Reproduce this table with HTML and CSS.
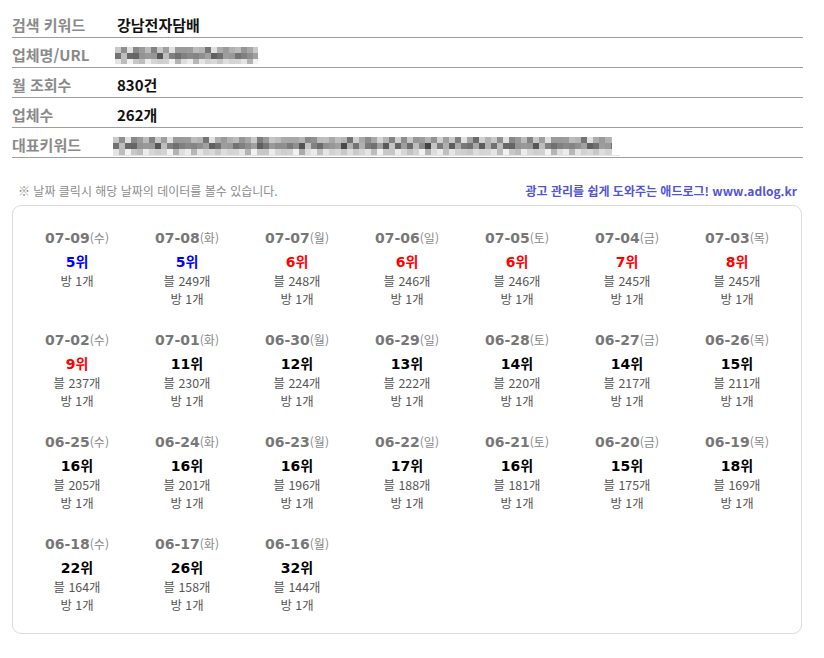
FILE: index.html
```html
<!DOCTYPE html>
<html lang="ko">
<head>
<meta charset="utf-8">
<link rel="stylesheet" href="styles.css">
</head>
<body>
<div class="wrap">
  <div class="info">
    <div class="row"><div class="label">검색 키워드</div><div class="value">강남전자담배</div></div>
    <div class="row"><div class="label">업체명/URL</div><div class="value">
      <svg class="blur blur-url" width="143" height="17" viewBox="0 0 143 17">
        <defs>
          <pattern id="pa" width="42" height="18" patternUnits="userSpaceOnUse">
            <rect x="0" y="0" width="6" height="6" fill="#c8c8c8"/><rect x="6" y="0" width="6" height="6" fill="#a8a8a8"/><rect x="12" y="0" width="6" height="6" fill="#e0e0e0"/><rect x="18" y="0" width="6" height="6" fill="#b5b5b5"/><rect x="24" y="0" width="6" height="6" fill="#9a9a9a"/><rect x="30" y="0" width="6" height="6" fill="#d0d0d0"/><rect x="36" y="0" width="6" height="6" fill="#bcbcbc"/>
            <rect x="0" y="6" width="6" height="6" fill="#8f8f8f"/><rect x="6" y="6" width="6" height="6" fill="#bdbdbd"/><rect x="12" y="6" width="6" height="6" fill="#a0a0a0"/><rect x="18" y="6" width="6" height="6" fill="#707070"/><rect x="24" y="6" width="6" height="6" fill="#c4c4c4"/><rect x="30" y="6" width="6" height="6" fill="#999999"/><rect x="36" y="6" width="6" height="6" fill="#b0b0b0"/>
            <rect x="0" y="12" width="6" height="6" fill="#e5e5e5"/><rect x="6" y="12" width="6" height="6" fill="#d2d2d2"/><rect x="12" y="12" width="6" height="6" fill="#f2f2f2"/><rect x="18" y="12" width="6" height="6" fill="#c8c8c8"/><rect x="24" y="12" width="6" height="6" fill="#dedede"/><rect x="30" y="12" width="6" height="6" fill="#ececec"/><rect x="36" y="12" width="6" height="6" fill="#d6d6d6"/>
          </pattern>
          <pattern id="pb" width="54" height="18" patternUnits="userSpaceOnUse">
            <rect x="6" y="0" width="6" height="6" fill="#000" fill-opacity=".15"/><rect x="18" y="0" width="6" height="6" fill="#000" fill-opacity=".25"/><rect x="30" y="0" width="6" height="6" fill="#000" fill-opacity=".1"/><rect x="36" y="0" width="6" height="6" fill="#000" fill-opacity=".3"/><rect x="48" y="0" width="6" height="6" fill="#000" fill-opacity=".05"/>
            <rect x="0" y="6" width="6" height="6" fill="#000" fill-opacity=".2"/><rect x="12" y="6" width="6" height="6" fill="#000" fill-opacity=".35"/><rect x="18" y="6" width="6" height="6" fill="#000" fill-opacity=".1"/><rect x="24" y="6" width="6" height="6" fill="#000" fill-opacity=".25"/><rect x="36" y="6" width="6" height="6" fill="#000" fill-opacity=".15"/><rect x="42" y="6" width="6" height="6" fill="#000" fill-opacity=".4"/>
            <rect x="6" y="12" width="6" height="6" fill="#000" fill-opacity=".1"/><rect x="24" y="12" width="6" height="6" fill="#000" fill-opacity=".15"/><rect x="42" y="12" width="6" height="6" fill="#000" fill-opacity=".1"/>
          </pattern>
        </defs>
        <rect width="143" height="17" fill="url(#pa)"/>
        <rect width="143" height="17" fill="url(#pb)"/>
      </svg>
    </div></div>
    <div class="row"><div class="label">월 조회수</div><div class="value">830건</div></div>
    <div class="row"><div class="label">업체수</div><div class="value">262개</div></div>
    <div class="row"><div class="label">대표키워드</div><div class="value">
      <svg class="blur blur-kw" width="507" height="19" viewBox="0 0 507 19">
        <rect width="499" height="18" fill="url(#pa)"/>
        <rect width="499" height="18" fill="url(#pb)"/>
        <rect x="0" y="18" width="507" height="1" fill="#e4e4e4"/>
      </svg>
    </div></div>
  </div>

  <div class="notes">
    <span class="note">※ 날짜 클릭시 해당 날짜의 데이터를 볼수 있습니다.</span>
    <span class="promo">광고 관리를 쉽게 도와주는 애드로그! www.adlog.kr</span>
  </div>

  <div class="card">
    <div class="grid">
      <div class="cell"><div class="date">07-09<span class="dow">(수)</span></div><div class="rank blue">5<span class="k">위</span></div><div class="sub">방 1개</div></div>
      <div class="cell"><div class="date">07-08<span class="dow">(화)</span></div><div class="rank blue">5<span class="k">위</span></div><div class="sub">블 249개</div><div class="sub">방 1개</div></div>
      <div class="cell"><div class="date">07-07<span class="dow">(월)</span></div><div class="rank red">6<span class="k">위</span></div><div class="sub">블 248개</div><div class="sub">방 1개</div></div>
      <div class="cell"><div class="date">07-06<span class="dow">(일)</span></div><div class="rank red">6<span class="k">위</span></div><div class="sub">블 246개</div><div class="sub">방 1개</div></div>
      <div class="cell"><div class="date">07-05<span class="dow">(토)</span></div><div class="rank red">6<span class="k">위</span></div><div class="sub">블 246개</div><div class="sub">방 1개</div></div>
      <div class="cell"><div class="date">07-04<span class="dow">(금)</span></div><div class="rank red">7<span class="k">위</span></div><div class="sub">블 245개</div><div class="sub">방 1개</div></div>
      <div class="cell"><div class="date">07-03<span class="dow">(목)</span></div><div class="rank red">8<span class="k">위</span></div><div class="sub">블 245개</div><div class="sub">방 1개</div></div>

      <div class="cell"><div class="date">07-02<span class="dow">(수)</span></div><div class="rank red">9<span class="k">위</span></div><div class="sub">블 237개</div><div class="sub">방 1개</div></div>
      <div class="cell"><div class="date">07-01<span class="dow">(화)</span></div><div class="rank">11<span class="k">위</span></div><div class="sub">블 230개</div><div class="sub">방 1개</div></div>
      <div class="cell"><div class="date">06-30<span class="dow">(월)</span></div><div class="rank">12<span class="k">위</span></div><div class="sub">블 224개</div><div class="sub">방 1개</div></div>
      <div class="cell"><div class="date">06-29<span class="dow">(일)</span></div><div class="rank">13<span class="k">위</span></div><div class="sub">블 222개</div><div class="sub">방 1개</div></div>
      <div class="cell"><div class="date">06-28<span class="dow">(토)</span></div><div class="rank">14<span class="k">위</span></div><div class="sub">블 220개</div><div class="sub">방 1개</div></div>
      <div class="cell"><div class="date">06-27<span class="dow">(금)</span></div><div class="rank">14<span class="k">위</span></div><div class="sub">블 217개</div><div class="sub">방 1개</div></div>
      <div class="cell"><div class="date">06-26<span class="dow">(목)</span></div><div class="rank">15<span class="k">위</span></div><div class="sub">블 211개</div><div class="sub">방 1개</div></div>

      <div class="cell"><div class="date">06-25<span class="dow">(수)</span></div><div class="rank">16<span class="k">위</span></div><div class="sub">블 205개</div><div class="sub">방 1개</div></div>
      <div class="cell"><div class="date">06-24<span class="dow">(화)</span></div><div class="rank">16<span class="k">위</span></div><div class="sub">블 201개</div><div class="sub">방 1개</div></div>
      <div class="cell"><div class="date">06-23<span class="dow">(월)</span></div><div class="rank">16<span class="k">위</span></div><div class="sub">블 196개</div><div class="sub">방 1개</div></div>
      <div class="cell"><div class="date">06-22<span class="dow">(일)</span></div><div class="rank">17<span class="k">위</span></div><div class="sub">블 188개</div><div class="sub">방 1개</div></div>
      <div class="cell"><div class="date">06-21<span class="dow">(토)</span></div><div class="rank">16<span class="k">위</span></div><div class="sub">블 181개</div><div class="sub">방 1개</div></div>
      <div class="cell"><div class="date">06-20<span class="dow">(금)</span></div><div class="rank">15<span class="k">위</span></div><div class="sub">블 175개</div><div class="sub">방 1개</div></div>
      <div class="cell"><div class="date">06-19<span class="dow">(목)</span></div><div class="rank">18<span class="k">위</span></div><div class="sub">블 169개</div><div class="sub">방 1개</div></div>

      <div class="cell"><div class="date">06-18<span class="dow">(수)</span></div><div class="rank">22<span class="k">위</span></div><div class="sub">블 164개</div><div class="sub">방 1개</div></div>
      <div class="cell"><div class="date">06-17<span class="dow">(화)</span></div><div class="rank">26<span class="k">위</span></div><div class="sub">블 158개</div><div class="sub">방 1개</div></div>
      <div class="cell"><div class="date">06-16<span class="dow">(월)</span></div><div class="rank">32<span class="k">위</span></div><div class="sub">블 144개</div><div class="sub">방 1개</div></div>
    </div>
  </div>
</div>
</body>
</html>
```

FILE: styles.css
```css
* { box-sizing: border-box; }
html, body { margin: 0; padding: 0; background: #fff; }
body { font-family: "Noto Sans CJK KR", "Noto Sans", sans-serif; }

.wrap {
  width: 803px;
  padding: 8px 0 0 12px;
}

.info { width: 791px; }
.row {
  display: flex;
  align-items: flex-start;
  height: 30px;
  padding-top: 5px;
  border-bottom: 1px solid #9e9e9e;
}
.label {
  width: 105px;
  flex: none;
  font-size: 15px;
  line-height: 24px;
  font-weight: 700;
  color: #8a8a8a;
}
.value {
  font-size: 15px;
  line-height: 24px;
  font-weight: 700;
  color: #111;
  display: flex;
}
.blur { display: block; margin-left: -2px; }
.blur-url { margin-top: 4px; }
.blur-kw { margin-top: 4px; margin-left: -4px; }

.notes {
  width: 791px;
  display: flex;
  justify-content: space-between;
  align-items: center;
  margin-top: 23px;
  height: 20px;
  padding: 0 6px 0 6px;
  margin-bottom: 4px;
}
.note {
  font-size: 12px;
  color: #8c8c8c;
  line-height: 20px;
}
.promo {
  font-size: 12px;
  font-weight: 700;
  color: #5454d6;
  line-height: 20px;
}

.card {
  width: 790px;
  border: 1px solid #dcdcdc;
  border-radius: 9px;
  padding: 23px 9px 20px;
}
.grid {
  display: grid;
  grid-template-columns: repeat(7, 110px);
  row-gap: 24px;
  align-items: start;
}
.cell {
  text-align: center;
  height: 78px;
}
.date {
  font-family: "DejaVu Sans", "Noto Sans CJK KR", sans-serif;
  font-weight: 700;
  font-size: 14px;
  line-height: 18px;
  color: #777;
  margin-bottom: 5px;
}
.dow {
  font-family: "Noto Sans CJK KR", sans-serif;
  font-weight: 400;
  font-size: 12px;
  color: #888;
}
.rank {
  font-family: "DejaVu Sans", "Noto Sans CJK KR", sans-serif;
  font-weight: 700;
  font-size: 14px;
  line-height: 19px;
  color: #000;
}
.rank .k { font-family: "Noto Sans CJK KR", sans-serif; font-size: 14px; }
.rank.blue { color: #0000ff; }
.rank.red { color: #ff0000; }
.sub {
  font-size: 12.4px;
  line-height: 18px;
  color: #555;
}
```
